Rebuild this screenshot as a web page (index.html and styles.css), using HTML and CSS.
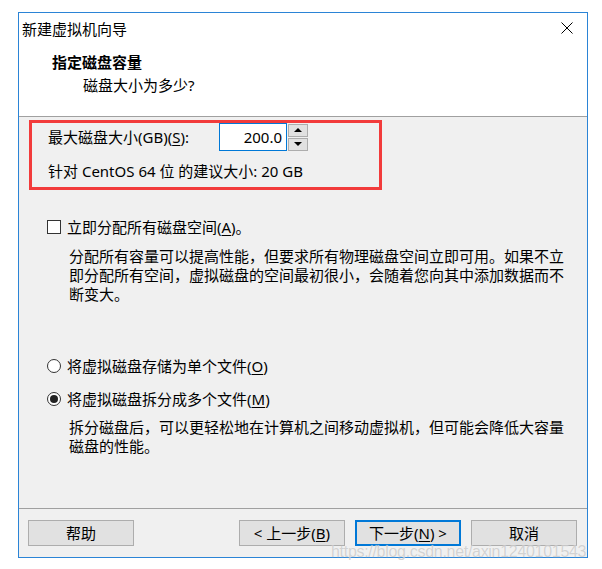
FILE: index.html
```html
<!DOCTYPE html>
<html lang="zh-CN">
<head>
<meta charset="utf-8">
<title>新建虚拟机向导</title>
<link rel="stylesheet" href="styles.css">
</head>
<body>
<div class="window">
  <div class="titlebar">
    <span class="title">新建虚拟机向导</span>
    <svg class="close" width="12" height="12" viewBox="0 0 12 12"><path d="M0.5 0.5 L11.5 11.5 M11.5 0.5 L0.5 11.5" stroke="#000" stroke-width="1" fill="none"/></svg>
  </div>
  <div class="header">
    <div class="heading">指定磁盘容量</div>
    <div class="subheading">磁盘大小为多少?</div>
  </div>
  <div class="content">
    <div class="highlight">
      <div class="size-row">
        <span class="label">最大磁盘大小(GB)(<u>S</u>):</span>
        <div class="spin">
          <div class="spin-input">200.0</div>
          <div class="spin-btns">
            <div class="spin-btn"><span class="tri-up"></span></div>
            <div class="spin-btn"><span class="tri-down"></span></div>
          </div>
        </div>
      </div>
      <div class="hint">针对 CentOS 64 位 的建议大小: 20 GB</div>
    </div>

    <div class="option check-row">
      <span class="checkbox"></span>
      <span>立即分配所有磁盘空间(<u>A</u>)。</span>
    </div>
    <p class="desc desc-alloc">分配所有容量可以提高性能，但要求所有物理磁盘空间立即可用。如果不立<br>即分配所有空间，虚拟磁盘的空间最初很小，会随着您向其中添加数据而不<br>断变大。</p>

    <div class="option radio-row first-radio">
      <span class="radio"></span>
      <span>将虚拟磁盘存储为单个文件(<u>O</u>)</span>
    </div>
    <div class="option radio-row second-radio">
      <span class="radio checked"></span>
      <span>将虚拟磁盘拆分成多个文件(<u>M</u>)</span>
    </div>
    <p class="desc desc-split">拆分磁盘后，可以更轻松地在计算机之间移动虚拟机，但可能会降低大容量<br>磁盘的性能。</p>
  </div>
  <div class="footer">
    <button class="btn">帮助</button>
    <div class="nav">
      <button class="btn">&lt; 上一步(<u>B</u>)</button>
      <button class="btn default">下一步(<u>N</u>) &gt;</button>
      <button class="btn cancel">取消</button>
    </div>
  </div>
</div>
<div class="watermark">https://blog.csdn.net/axin1240101543</div>
</body>
</html>
```

FILE: styles.css
```css
* { box-sizing: border-box; }
html, body { margin: 0; padding: 0; }
body {
  background: #ffffff;
  font-family: "Noto Sans", "Noto Sans CJK SC", sans-serif;
  font-size: 15px;
  color: #000;
  width: 602px;
  height: 569px;
  overflow: hidden;
}
u { text-decoration: underline; text-underline-offset: 2px; }

.window {
  margin: 12px 0 0 18px;
  width: 570px;
  height: 546px;
  border: 1px solid #2b84d6;
  display: flex;
  flex-direction: column;
  background: #f0f0f0;
}

.titlebar {
  height: 32px;
  background: #fff;
  display: flex;
  align-items: center;
  justify-content: space-between;
  padding: 0 14px 0 3px;
  line-height: 20px;
}
.close { display: block; margin-top: -2px; }

.header {
  height: 72px;
  background: #fff;
  border-bottom: 1px solid #a0a0a0;
  line-height: 20px;
}
.heading {
  font-weight: bold;
  padding: 7px 0 0 33px;
}
.subheading {
  padding: 3px 0 0 64px;
}

.content {
  flex: 1;
  padding: 3px 0 0 10px;
  line-height: 20px;
}

.highlight {
  width: 353px;
  height: 70px;
  border: 3px solid #f23b3b;
  padding: 0 0 0 16px;
}
.size-row {
  display: flex;
  align-items: center;
  height: 28px;
}
.label { width: 171px; }
.spin { display: flex; height: 28px; }
.spin-input {
  width: 68px;
  height: 28px;
  border: 1px solid #0078d7;
  background: #fff;
  text-align: right;
  padding: 3px 4px 0 0;
  line-height: 20px;
}
.spin-btns {
  display: flex;
  flex-direction: column;
  justify-content: center;
  gap: 1px;
  margin-left: 1px;
}
.spin-btn {
  width: 20px;
  height: 13px;
  background: #e1e1e1;
  border: 1px solid #adadad;
  display: flex;
  align-items: center;
  justify-content: center;
}
.tri-up, .tri-down { width: 0; height: 0; border-left: 4px solid transparent; border-right: 4px solid transparent; }
.tri-up { border-bottom: 4px solid #000; }
.tri-down { border-top: 4px solid #000; }
.hint { margin-top: 10px; }

.option {
  display: flex;
  align-items: center;
  gap: 6px;
  padding-left: 18px;
}
.check-row { margin-top: 27px; }
.checkbox {
  width: 14px;
  height: 14px;
  border: 1px solid #333;
  background: #fff;
}
.radio {
  width: 14px;
  height: 14px;
  border: 1px solid #333;
  border-radius: 50%;
  background: #fff;
  display: flex;
  align-items: center;
  justify-content: center;
}
.radio.checked::after {
  content: "";
  width: 8px;
  height: 8px;
  border-radius: 50%;
  background: #222;
}
.desc {
  margin: 0;
  padding: 0 0 0 40px;
  line-height: 19px;
  white-space: nowrap;
}
.desc-alloc { margin-top: 10px; }
.first-radio { margin-top: 52px; }
.second-radio { margin-top: 13px; }
.desc-split { margin-top: 9px; }

.footer {
  height: 49px;
  border-top: 1px solid #a0a0a0;
  display: flex;
  justify-content: space-between;
  padding: 11px 10px 0 9px;
}
.nav { display: flex; gap: 10px; }
.btn {
  width: 106px;
  height: 26px;
  background: #e1e1e1;
  border: 1px solid #adadad;
  font-family: "Noto Sans", "Noto Sans CJK SC", sans-serif;
  font-size: 15px;
  color: #000;
  padding: 0;
  line-height: 20px;
}
.btn.default { border: 2px solid #0078d7; }

.watermark {
  position: absolute;
  left: 331px;
  top: 543px;
  font-family: "Liberation Sans", sans-serif;
  font-size: 16px;
  line-height: 18px;
  color: rgba(170, 170, 170, 0.5);
  text-shadow: 0 0 1px rgba(255,255,255,0.8);
  letter-spacing: -0.3px;
}
```
